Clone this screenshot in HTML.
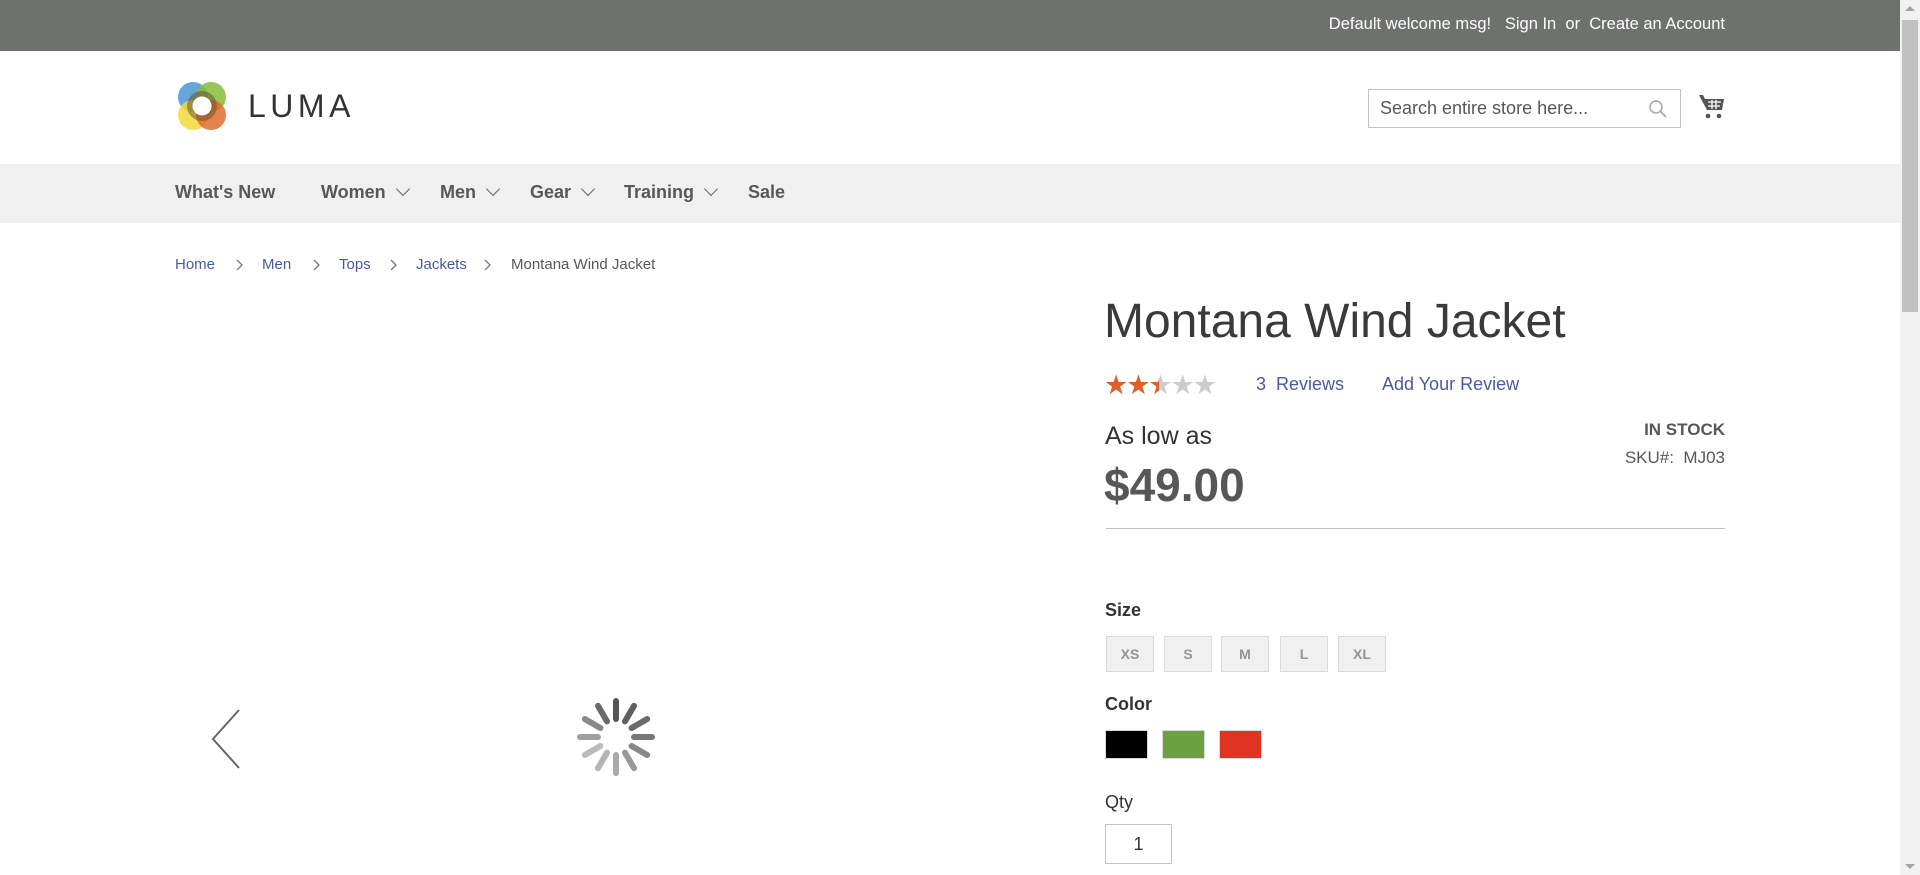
<!DOCTYPE html>
<html><head><meta charset="utf-8"><style>
*{margin:0;padding:0;box-sizing:border-box}
body{width:1920px;height:875px;overflow:hidden;background:#fff;font-family:"Liberation Sans",sans-serif;color:#333;position:relative}
.a{position:absolute;white-space:nowrap}
.top{position:absolute;left:0;top:0;width:1900px;height:51px;background:#6e716e}
.nav{position:absolute;left:0;top:164px;width:1900px;height:59px;background:#f0f0f0}
.ni{font-weight:bold;font-size:18px;color:#575757;top:182px}
.chev{display:inline-block;width:10px;height:10px;border-right:1.5px solid #666;border-bottom:1.5px solid #666;transform:rotate(45deg);margin-left:12px;position:relative;top:-4px}
.bc{font-size:15px;color:#4a5a9e;top:256px}
.lnk{color:#4a5a9e;font-size:18px;top:374px}
.sz{position:absolute;top:636px;width:48px;height:36px;background:#f0f0f0;border:1px solid #dadada;font-weight:bold;font-size:14px;color:#949494;text-align:center;line-height:34px}
.cs{position:absolute;top:730px;width:43px;height:29px;border:1px solid #dadada}
.lbl{font-weight:bold;font-size:18px;color:#333}
</style></head><body>
<div class="top"></div>
<div class="a" style="right:195px;top:15px;color:#fff;font-size:16.5px">Default welcome msg! &nbsp; Sign In &nbsp;or&nbsp; Create an Account</div>

<svg class="a" style="left:174px;top:78px" width="56" height="56" viewBox="0 0 56 56">
<circle cx="19" cy="19" r="15" fill="#4a96d6" opacity=".85"/>
<circle cx="37" cy="19" r="15" fill="#86bc3c" opacity=".85"/>
<circle cx="19" cy="37" r="15" fill="#f2d93a" opacity=".85"/>
<circle cx="37" cy="37" r="15" fill="#e06c2e" opacity=".85"/>
<circle cx="28" cy="28" r="12" fill="none" stroke="#6b4a2a" stroke-width="6" opacity=".5"/>
<circle cx="28" cy="28" r="9.5" fill="#fff"/>
</svg>
<div class="a" style="left:248px;top:88px;font-size:32px;letter-spacing:4.5px;color:#333">LUMA</div>

<div class="a" style="left:1368px;top:89px;width:313px;height:39px;border:1px solid #c2c2c2"></div>
<div class="a" style="left:1380px;top:98px;font-size:18px;color:#575757">Search entire store here...</div>
<svg class="a" style="left:1648px;top:99px" width="20" height="20" viewBox="0 0 20 20"><circle cx="8" cy="8" r="6" fill="none" stroke="#aaa" stroke-width="1.6"/><path d="M12.5 12.5L18 18" stroke="#aaa" stroke-width="1.8"/></svg>
<svg class="a" style="left:1698px;top:93px" width="28" height="28" viewBox="0 0 28 28"><path d="M1 2h4l2 4h19l-2 11H9z" fill="#555"/><circle cx="10" cy="23" r="2.3" fill="#555"/><circle cx="21" cy="23" r="2.3" fill="#555"/><path d="M10 9h13M10 13h12M14 7v9M18 7v9" stroke="#fff" stroke-width="1.3"/></svg>

<div class="nav"></div>
<div class="a ni" style="left:175px">What's New</div>
<div class="a ni" style="left:321px">Women<span class="chev"></span></div>
<div class="a ni" style="left:440px">Men<span class="chev"></span></div>
<div class="a ni" style="left:530px">Gear<span class="chev"></span></div>
<div class="a ni" style="left:624px">Training<span class="chev"></span></div>
<div class="a ni" style="left:748px">Sale</div>

<svg class="a" style="left:0;top:258px" width="700" height="14">
<g fill="none" stroke="#777" stroke-width="1.3"><path d="M237 2l5 5-5 5M314 2l5 5-5 5M391 2l5 5-5 5M485 2l5 5-5 5"/></g></svg>
<div class="a bc" style="left:175px">Home</div>
<div class="a bc" style="left:262px">Men</div>
<div class="a bc" style="left:339px">Tops</div>
<div class="a bc" style="left:416px">Jackets</div>
<div class="a" style="left:511px;top:256px;font-size:15px;color:#575757">Montana Wind Jacket</div>

<svg class="a" style="left:209px;top:708px" width="34" height="62" viewBox="0 0 34 62"><path d="M30 2L4 31l26 29" fill="none" stroke="#666" stroke-width="2"/></svg>
<svg class="a" style="left:574px;top:695px" width="84" height="84" viewBox="-42 -42 84 84">
<g stroke-width="6" stroke-linecap="round">
<line x1="0" y1="-18" x2="0" y2="-36" stroke="#555" transform="rotate(0)"/>
<line x1="0" y1="-18" x2="0" y2="-36" stroke="#606060" transform="rotate(30)"/>
<line x1="0" y1="-18" x2="0" y2="-36" stroke="#6a6a6a" transform="rotate(60)"/>
<line x1="0" y1="-18" x2="0" y2="-36" stroke="#777" transform="rotate(90)"/>
<line x1="0" y1="-18" x2="0" y2="-36" stroke="#888" transform="rotate(120)"/>
<line x1="0" y1="-18" x2="0" y2="-36" stroke="#999" transform="rotate(150)"/>
<line x1="0" y1="-18" x2="0" y2="-36" stroke="#aaa" transform="rotate(180)"/>
<line x1="0" y1="-18" x2="0" y2="-36" stroke="#b5b5b5" transform="rotate(210)"/>
<line x1="0" y1="-18" x2="0" y2="-36" stroke="#bbb" transform="rotate(240)"/>
<line x1="0" y1="-18" x2="0" y2="-36" stroke="#a0a0a0" transform="rotate(270)"/>
<line x1="0" y1="-18" x2="0" y2="-36" stroke="#888" transform="rotate(300)"/>
<line x1="0" y1="-18" x2="0" y2="-36" stroke="#6a6a6a" transform="rotate(330)"/>
</g></svg>

<div class="a" style="left:1104px;top:294px;font-size:48px;font-weight:300;color:#3a3a3a">Montana Wind Jacket</div>
<div class="a" style="left:1104px;top:370px;font-size:27px;letter-spacing:-2px;color:#ccc">★★★★★</div>
<div class="a" style="left:1104px;top:370px;font-size:27px;letter-spacing:-2px;color:#e0602b;width:55px;overflow:hidden">★★★★★</div>
<div class="a lnk" style="left:1256px">3&nbsp; Reviews</div>
<div class="a lnk" style="left:1382px">Add Your Review</div>
<div class="a" style="left:1105px;top:422px;font-size:25px;color:#333">As low as</div>
<div class="a" style="left:1104px;top:458px;font-size:46px;font-weight:bold;color:#575757">$49.00</div>
<div class="a" style="right:195px;top:420px;font-size:17px;font-weight:bold;color:#575757">IN STOCK</div>
<div class="a" style="right:195px;top:448px;font-size:17px;color:#575757">SKU#:&nbsp; MJ03</div>
<div class="a" style="left:1106px;top:528px;width:619px;height:1px;background:#c1c1c1"></div>

<div class="a lbl" style="left:1105px;top:600px">Size</div>
<div class="sz" style="left:1106px">XS</div>
<div class="sz" style="left:1164px">S</div>
<div class="sz" style="left:1221px">M</div>
<div class="sz" style="left:1280px">L</div>
<div class="sz" style="left:1338px">XL</div>
<div class="a lbl" style="left:1105px;top:694px">Color</div>
<div class="cs" style="left:1105px;background:#000"></div>
<div class="cs" style="left:1162px;background:#6ba141"></div>
<div class="cs" style="left:1219px;background:#e03324"></div>
<div class="a" style="left:1105px;top:792px;font-size:18px;color:#333">Qty</div>
<div class="a" style="left:1105px;top:824px;width:67px;height:40px;border:1px solid #c2c2c2;text-align:center;line-height:38px;font-size:18px;color:#333">1</div>

<div class="a" style="left:1900px;top:0;width:20px;height:875px;background:#f1f1f1"></div>
<div class="a" style="left:1902px;top:20px;width:16px;height:292px;background:#c1c1c1"></div>
<div class="a" style="left:1905px;top:6px;border:5px solid transparent;border-bottom-color:#a3a3a3;border-top:0"></div>
<div class="a" style="left:1905px;top:864px;border:5px solid transparent;border-top-color:#a3a3a3;border-bottom:0"></div>
</body></html>
